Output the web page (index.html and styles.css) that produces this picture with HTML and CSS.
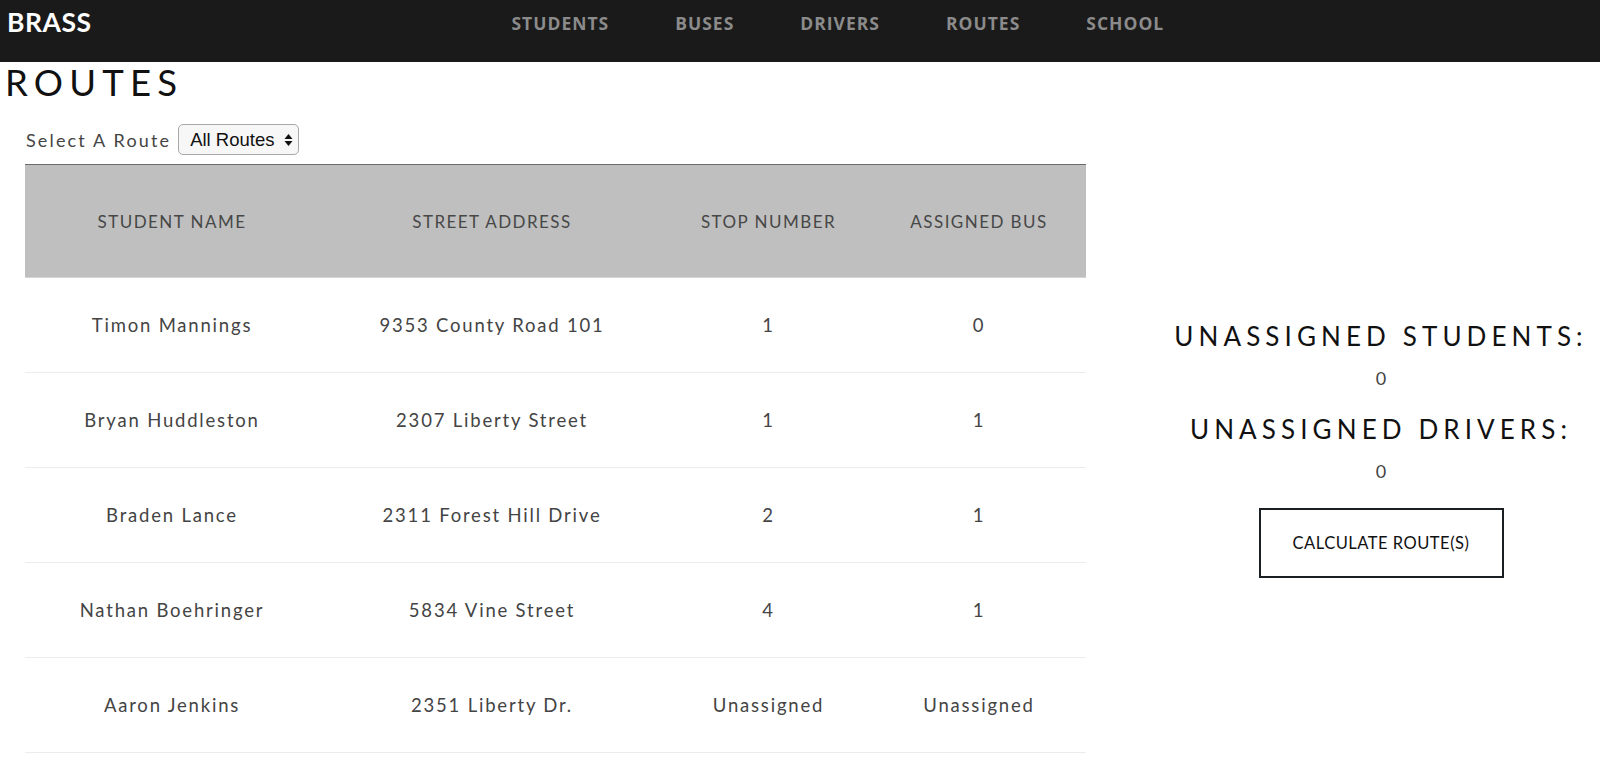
FILE: index.html
```html
<!DOCTYPE html>
<html lang="en">
<head>
<meta charset="utf-8">
<title>BRASS - Routes</title>
<link rel="stylesheet" href="styles.css">
</head>
<body>
<header class="navbar">
  <a class="brand" href="#">BRASS</a>
  <nav class="nav-links">
    <a href="#">STUDENTS</a>
    <a href="#">BUSES</a>
    <a href="#">DRIVERS</a>
    <a href="#">ROUTES</a>
    <a href="#">SCHOOL</a>
  </nav>
</header>
<main class="page">
  <h1 class="page-title">ROUTES</h1>
  <div class="select-row">
    <label class="select-label" for="route">Select A Route</label>
    <span class="select-wrap">
      <select id="route" class="route-select">
        <option>All Routes</option>
      </select>
      <svg class="select-arrows" width="9" height="14" viewBox="0 0 9 14" aria-hidden="true">
        <path d="M4.5 1 L8.5 6 L0.5 6 Z" fill="#111"/>
        <path d="M4.5 13 L8.5 8 L0.5 8 Z" fill="#111"/>
      </svg>
    </span>
  </div>
  <div class="content">
    <table class="routes-table">
      <thead>
        <tr>
          <th class="c1">STUDENT NAME</th>
          <th class="c2">STREET ADDRESS</th>
          <th class="c3">STOP NUMBER</th>
          <th class="c4">ASSIGNED BUS</th>
        </tr>
      </thead>
      <tbody>
        <tr><td>Timon Mannings</td><td>9353 County Road 101</td><td>1</td><td>0</td></tr>
        <tr><td>Bryan Huddleston</td><td>2307 Liberty Street</td><td>1</td><td>1</td></tr>
        <tr><td>Braden Lance</td><td>2311 Forest Hill Drive</td><td>2</td><td>1</td></tr>
        <tr><td>Nathan Boehringer</td><td>5834 Vine Street</td><td>4</td><td>1</td></tr>
        <tr><td>Aaron Jenkins</td><td>2351 Liberty Dr.</td><td>Unassigned</td><td>Unassigned</td></tr>
      </tbody>
    </table>
    <aside class="side">
      <h2 class="side-title">UNASSIGNED STUDENTS:</h2>
      <p class="side-count">0</p>
      <h2 class="side-title">UNASSIGNED DRIVERS:</h2>
      <p class="side-count">0</p>
      <button class="calc-btn" type="button">CALCULATE ROUTE(S)</button>
    </aside>
  </div>
</main>
</body>
</html>
```

FILE: styles.css
```css
* { box-sizing: border-box; }

html, body {
  margin: 0;
  padding: 0;
  background: #fff;
  font-family: "Lato", "Noto Sans", sans-serif;
  overflow: hidden;
}

.navbar {
  height: 62px;
  background: #1a1a1a;
  display: flex;
  align-items: flex-start;
}

.brand {
  color: #fff;
  text-decoration: none;
  font-family: "Lato", sans-serif;
  font-weight: 700;
  font-size: 26.5px;
  line-height: 27px;
  margin: 9px 0 0 7px;
  letter-spacing: 0.5px;
}

.nav-links {
  display: flex;
  gap: 66px;
  margin: 13px 0 0 420px;
}

.nav-links a {
  color: #8b8b8b;
  text-decoration: none;
  font-family: "Open Sans", sans-serif;
  font-weight: 700;
  font-size: 17.5px;
  line-height: 20px;
  letter-spacing: 1px;
}

.page-title {
  margin: 0 0 0 5px;
  font-family: "Lato", sans-serif;
  font-weight: 400;
  font-size: 36.5px;
  line-height: 40px;
  letter-spacing: 6.2px;
  color: #111;
}

.select-row {
  display: flex;
  align-items: center;
  margin: 22px 0 0 26px;
  height: 31px;
}

.select-label {
  font-size: 18px;
  color: #444;
  letter-spacing: 2.15px;
  margin-right: 7px;
}

.select-wrap {
  position: relative;
  display: inline-block;
}

.route-select {
  appearance: none;
  -webkit-appearance: none;
  width: 121px;
  height: 31px;
  border: 1px solid #a8a8a8;
  border-radius: 5px;
  background: #f7f7f7;
  font-family: "Liberation Sans", Arial, sans-serif;
  font-size: 18.5px;
  color: #111;
  padding: 0 0 0 11px;
}

.select-arrows {
  position: absolute;
  right: 6px;
  top: 9px;
  pointer-events: none;
}

.content {
  display: flex;
  align-items: flex-start;
  margin-top: 9px;
}

.routes-table {
  margin-left: 25px;
  width: 1061px;
  border-collapse: collapse;
  table-layout: fixed;
  border-top: 1px solid #6a6a6a;
}

.routes-table .c1 { width: 294px; }
.routes-table .c2 { width: 346px; }
.routes-table .c3 { width: 207px; }
.routes-table .c4 { width: 214px; }

.routes-table th {
  background: #bfbfbf;
  height: 113px;
  font-weight: 400;
  font-size: 17px;
  letter-spacing: 1.45px;
  color: #474747;
  text-align: center;
  padding: 0;
  border-bottom: 1px solid #d6d6d6;
}

.routes-table td {
  height: 95px;
  font-size: 18.5px;
  letter-spacing: 1.8px;
  color: #444;
  text-align: center;
  padding: 0;
  border-bottom: 1px solid #ececec;
}

.side {
  flex: 1;
  margin-left: 76px;
  margin-top: 157px;
  display: flex;
  flex-direction: column;
  align-items: center;
}

.side-title {
  margin: 0;
  font-weight: 400;
  font-size: 26px;
  line-height: 30px;
  letter-spacing: 5.1px;
  color: #111;
  white-space: nowrap;
}

.side-count {
  margin: 16px 0 25px;
  font-size: 18px;
  line-height: 22px;
  color: #444;
}

.side-count:last-of-type {
  margin-bottom: 26px;
}

.calc-btn {
  width: 245px;
  height: 70px;
  border: 2px solid #1a1f24;
  background: #fff;
  font-family: "Lato", sans-serif;
  font-size: 16.5px;
  color: #111;
  letter-spacing: 0.5px;
  padding: 0;
}
```
